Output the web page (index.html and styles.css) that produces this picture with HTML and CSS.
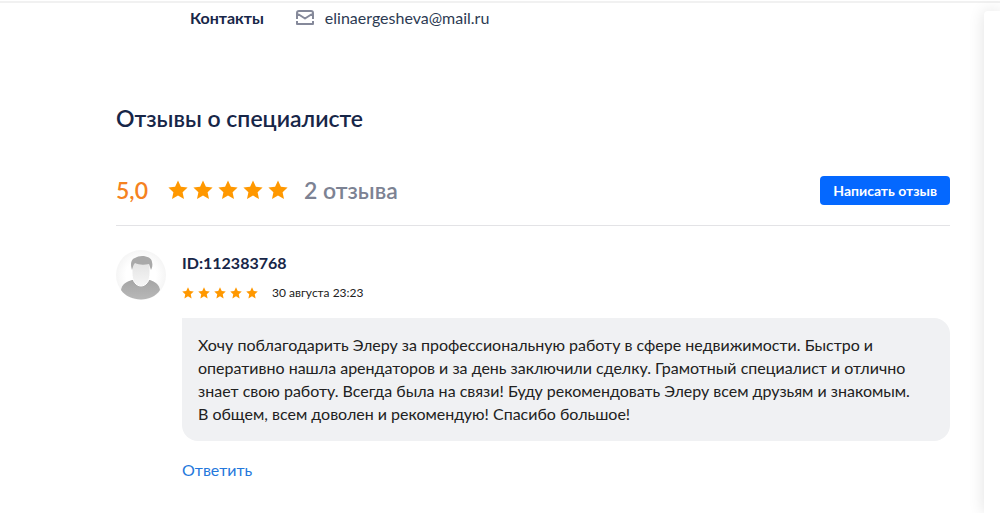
FILE: index.html
```html
<!DOCTYPE html>
<html lang="ru">
<head>
    <meta charset="UTF-8">
    <title>Отзывы о специалисте</title>
    <link rel="stylesheet" href="styles.css">
</head>

<body>
<svg class="sprite" aria-hidden="true">
    <symbol id="star" viewBox="0 0 20 20">
        <path d="M10 .6l2.9 6.2 6.7.8-5 4.6 1.4 6.8-6-3.4L4 19l1.400-6.800-5-4.600 6.700-.8z"/>
    </symbol>
</svg>
<div class="page">
    <main class="content">
        <div class="contacts">
            <b class="contacts-title">Контакты</b>
            <svg class="mail-icon" viewBox="0 0 18 16" aria-hidden="true">
                <path d="M1 9V3Q1 1 3 1h12Q17 1 17 3V9M2 4l7 4.500L16 4M1 11v3h16v-3"/>
            </svg>
            <span>elinaergesheva@mail.ru</span>
        </div>
        <h2 class="title">Отзывы о специалисте</h2>
        <div class="summary">
            <span class="score">5,0</span>
            <div class="stars stars-big">
                <svg><use href="#star"/></svg>
                <svg><use href="#star"/></svg>
                <svg><use href="#star"/></svg>
                <svg><use href="#star"/></svg>
                <svg><use href="#star"/></svg>
            </div>
            <span class="count">2 отзыва</span>
            <button class="btn" type="button">Написать отзыв</button>
        </div>
        <article class="review">
            <svg class="avatar" viewBox="0 0 50 50" role="img" aria-label="Аватар">
                <defs>
                    <radialGradient id="bg">
                        <stop offset="0.6" stop-color="#fff"/>
                        <stop offset="1" stop-color="#f5f5f5"/>
                    </radialGradient>
                    <linearGradient id="face" x2="0" y2="1">
                        <stop offset="0" stop-color="#e2e2e2"/>
                        <stop offset="1" stop-color="#f6f6f6"/>
                    </linearGradient>
                    <linearGradient id="body" x2="0" y2="1">
                        <stop offset="0" stop-color="#a5a5a5"/>
                        <stop offset="1" stop-color="#b8b8b8"/>
                    </linearGradient>
                </defs>
                <circle cx="25" cy="25" r="25" fill="url(#bg)"/>
                <path d="M16 30c-6 2-10 4-11 10 4 6 12 9.500 20 9.500S40 46 44 40c-1-6-5-8-10-10z" fill="url(#body)"/>
                <path d="M16 17v6c0 8 4 13 9 13s9-5 9-13v-6c0-4-4-6-9-6s-9 2-9 6z" fill="url(#face)" stroke="#fff"/>
                <path d="M16 20c-2-6-1-11 3-12 5-4 17-2 17 4 1 3 0 6-1 8l-2-6c-5 1-10 1-14-1-2 2-2 4-3 7z" fill="#a9a9a9"/>
            </svg>
            <div class="review-body">
                <h3 class="author">ID:112383768</h3>
                <div class="meta">
                    <div class="stars">
                        <svg><use href="#star"/></svg>
                        <svg><use href="#star"/></svg>
                        <svg><use href="#star"/></svg>
                        <svg><use href="#star"/></svg>
                        <svg><use href="#star"/></svg>
                    </div>
                    <time>30 августа 23:23</time>
                </div>
                <p class="text">Хочу поблагодарить Элеру за профессиональную работу в сфере недвижимости. Быстро и оперативно нашла арендаторов и за день заключили сделку. Грамотный специалист и отлично знает свою работу. Всегда была на связи! Буду рекомендовать Элеру всем друзьям и знакомым. В&nbsp;общем, всем доволен и рекомендую! Спасибо большое!</p>
                <a class="reply" href="#">Ответить</a>
            </div>
        </article>
    </main>
    <aside class="side"></aside>
</div>
</body>

</html>
```

FILE: styles.css
```css
body{
    margin: 0;
    background: #fff;
    color: #212121;
    font-family: Lato, "Open Sans", sans-serif;
    font-size: 16px;
    line-height: 23px;
}
.sprite{
    display: none;
}
.page{
    display: flex;
    min-height: 100vh;
    box-sizing: border-box;
    padding-top: 1px;
    overflow: hidden;
    background: linear-gradient(#f1f1f1, #f1f1f1) 0 1px / 100% 2px no-repeat;
}
.content{
    flex: 1;
    min-width: 0;
    padding: 5px 34px 30px 116px;
}
.side{
    flex: 0 0 16px;
    margin-top: 10px;
    border-radius: 4px 0 0 0;
    background: #fff;
    box-shadow: 0 0 16px rgba(0,0,0,0.12);
}
.contacts{
    display: flex;
    align-items: center;
    padding-left: 74px;
    color: #2c3a52;
}
.contacts-title{
    color: #172648;
}
.mail-icon{
    width: 18px;
    height: 16px;
    margin: 0 11px 0 32px;
    fill: none;
    stroke: #85899a;
    stroke-width: 2;
    stroke-linejoin: round;
}
.title{
    margin: 73px 0 40px;
    color: #172648;
    font-size: 23px;
    font-weight: 600;
    line-height: 32px;
}
.summary{
    display: flex;
    align-items: center;
    padding-bottom: 19px;
    border-bottom: 1px solid #e3e3e6;
    font-size: 23px;
    font-weight: 600;
    line-height: 32px;
}
.score{
    color: #f58220;
}
.stars{
    display: flex;
    gap: 4px;
    fill: #ff9800;
}
.stars svg{
    width: 12px;
    height: 12px;
}
.stars-big{
    gap: 5px;
    margin: 0 16px 0 20px;
}
.stars-big svg{
    width: 20px;
    height: 20px;
}
.count{
    color: #7c8293;
}
.btn{
    margin-left: auto;
    padding: 0 13px;
    border: 0;
    border-radius: 4px;
    background: #0468ff;
    color: #fff;
    font-family: inherit;
    font-size: 14px;
    font-weight: bold;
    line-height: 29px;
    cursor: pointer;
}
.btn:hover{
    background: #0057db;
}
.review{
    display: flex;
    gap: 16px;
    padding-top: 24px;
}
.avatar{
    flex: none;
    width: 50px;
    height: 50px;
}
.review-body{
    flex: 1;
    min-width: 0;
}
.author{
    margin: 1px 0 7px;
    color: #172648;
    font-size: 16px;
    font-weight: bold;
}
.meta{
    display: flex;
    align-items: center;
    gap: 14px;
    font-size: 12px;
}
.text{
    margin: 14px 0 17px;
    padding: 15px 16px 16px;
    border-radius: 0 16px 16px 16px;
    background: #f0f1f3;
}
.reply{
    color: #2478dc;
    text-decoration: none;
}
.reply:hover{
    text-decoration: underline;
}
```
